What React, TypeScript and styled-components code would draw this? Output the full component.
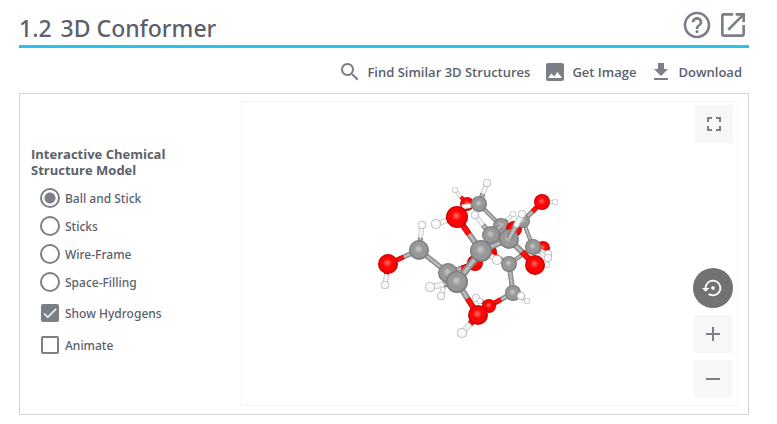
import React from "react";
import styled, { createGlobalStyle } from "styled-components";

const ink = "#5b616b";
const steel = "#7b7f88";

const GlobalStyle = createGlobalStyle`
  * { box-sizing: border-box; }
  body { margin: 0; background: #fff; color: ${ink}; font-family: "Noto Sans", "Open Sans", sans-serif; }
  button, input { font: inherit; color: inherit; }
`;

const Section = styled.section`
  padding: 10px 28px 9px 19px;
`;

const Header = styled.header`
  display: flex;
  align-items: center;
  justify-content: space-between;
  height: 38px;
  border-bottom: 3px solid #26c4ea;
`;

const Title = styled.h2`
  margin: 0;
  display: flex;
  gap: 9px;
  font-size: 23px;
  line-height: 32px;
  font-weight: 500;
`;

const HeaderIcons = styled.div`
  display: flex;
  gap: 4px;
  padding-bottom: 5px;
`;

const IconLink = styled.a`
  display: flex;
  color: ${steel};
`;

const Toolbar = styled.div`
  display: flex;
  justify-content: flex-end;
  align-items: center;
  gap: 13px;
  height: 45px;
  padding: 3px 7px 0 0;
`;

const ToolButton = styled.button`
  display: flex;
  align-items: center;
  gap: 5px;
  padding: 0;
  border: 0;
  background: none;
  font-family: "Open Sans", "Noto Sans", sans-serif;
  font-size: 13px;
  line-height: 20px;
  font-weight: 600;
  svg { color: ${steel}; }
`;

const Panel = styled.div`
  display: grid;
  grid-template-columns: 211px minmax(0, 1fr);
  padding: 7px 10px 8px;
  border: 1px solid #d3d3d4;
`;

const Controls = styled.form`
  padding: 45px 0 0 1px;
`;

const Group = styled.fieldset`
  margin: 0;
  padding: 0;
  border: 0;
`;

const Legend = styled.legend`
  width: 150px;
  padding: 0;
  margin-bottom: 6px;
  font-family: "Open Sans", "Noto Sans", sans-serif;
  font-size: 13px;
  line-height: 16px;
  font-weight: 700;
`;

const Option = styled.label<{ $tall?: boolean }>`
  display: flex;
  align-items: center;
  gap: 4px;
  height: ${(p) => (p.$tall ? 32 : 28)}px;
  padding-left: 9px;
  font-size: 12px;
  font-weight: 500;
`;

const Radio = styled.input`
  appearance: none;
  width: 20px;
  height: 20px;
  margin: 0 1px 0 0;
  border: 2px solid ${steel};
  border-radius: 50%;
  &:checked { background: radial-gradient(circle, ${steel} 0 5px, transparent 6px); }
`;

const Checks = styled.div`
  padding-top: 1px;
`;

const Tick = styled.input`
  appearance: none;
  width: 18px;
  height: 18px;
  margin: 0 2px 0 1px;
  border: 2px solid ${steel};
  border-radius: 2px;
  &:checked { background: ${steel}; }
  & + svg { visibility: hidden; }
  &:checked + svg { visibility: visible; }
`;

const TickBox = styled.span`
  display: grid;
  align-items: center;
  > * { grid-area: 1 / 1; }
  svg { margin-left: 1px; color: #fff; pointer-events: none; }
`;

const Viewer = styled.div`
  position: relative;
  display: flex;
  border: 1px dotted #e8e8e8;
`;

const Molecule = styled.svg`
  width: 100%;
  height: 303px;
`;

const Tools = styled.div`
  position: absolute;
  inset: 3px 4px 7px auto;
  display: flex;
  flex-direction: column;
  align-items: flex-end;
  gap: 7px;
`;

const Tool = styled.button<{ $round?: boolean }>`
  display: flex;
  align-items: center;
  justify-content: center;
  width: ${(p) => (p.$round ? 40 : 38)}px;
  height: ${(p) => (p.$round ? 40 : 38)}px;
  padding: 0;
  border: 0;
  border-radius: ${(p) => (p.$round ? "50%" : "2px")};
  background: ${(p) => (p.$round ? "#727272" : "#f7f7f7")};
  color: ${(p) => (p.$round ? "#fff" : steel)};
`;

const ZoomTools = styled.div`
  display: flex;
  flex-direction: column;
  align-items: center;
  gap: 7px;
  margin-top: auto;
`;

const Icon = ({ d, size }: { d: string; size: number }) => (
  <svg width={size} height={size} viewBox="0 0 24 24" fill="currentColor" aria-hidden="true">
    <path d={d} />
  </svg>
);

const icons = {
  help: "M11 18h2v-2h-2v2zm1-16C6.48 2 2 6.48 2 12s4.480 10 10 10 10-4.480 10-10S17.520 2 12 2zm0 18c-4.410 0-8-3.590-8-8s3.590-8 8-8 8 3.590 8 8-3.590 8-8 8zm0-14c-2.210 0-4 1.790-4 4h2c0-1.100.9-2 2-2s2 .9 2 2c0 2-3 1.750-3 5h2c0-2.250 3-2.500 3-5 0-2.210-1.790-4-4-4z",
  open: "M19 19H5V5h7V3H5c-1.110 0-2 .9-2 2v14c0 1.100.89 2 2 2h14c1.100 0 2-.9 2-2v-7h-2v7zM14 3v2h3.590l-9.830 9.830 1.410 1.410L19 6.410V10h2V3h-7z",
  search: "M15.500 14h-.79l-.28-.27C15.410 12.590 16 11.110 16 9.500 16 5.910 13.090 3 9.500 3S3 5.910 3 9.500 5.910 16 9.500 16c1.610 0 3.090-.59 4.230-1.570l.27.28v.79l5 4.990L20.490 19l-4.990-5zm-6 0C7.010 14 5 11.990 5 9.500S7.010 5 9.500 5 14 7.010 14 9.500 11.990 14 9.500 14z",
  image: "M21 19V5c0-1.100-.9-2-2-2H5c-1.100 0-2 .9-2 2v14c0 1.100.9 2 2 2h14c1.100 0 2-.9 2-2zM8.500 13.500l2.500 3.010L14.500 12l4.500 6H5l3.500-4.500z",
  download: "M19 9h-4V3H9v6H5l7 7 7-7zM5 18v2h14v-2H5z",
  full: "M7 14H5v5h5v-2H7v-3zm-2-4h2V7h3V5H5v5zm12 7h-3v2h5v-5h-2v3zM14 5v2h3v3h2V5h-5z",
  reset: "M14 12c0-1.100-.9-2-2-2s-2 .9-2 2 .9 2 2 2 2-.9 2-2zm-2-9c-4.970 0-9 4.030-9 9H0l4 4 4-4H5c0-3.870 3.130-7 7-7s7 3.130 7 7-3.130 7-7 7c-1.510 0-2.910-.49-4.060-1.300l-1.420 1.440C8.040 20.300 9.940 21 12 21c4.970 0 9-4.030 9-9s-4.030-9-9-9z",
  plus: "M19 13h-6v6h-2v-6H5v-2h6V5h2v6h6v2z",
  minus: "M19 13H5v-2h14v2z",
  check: "M9 16.170L4.830 12l-1.420 1.410L9 19 21 7l-1.410-1.410z",
};

type Element = "C" | "O" | "H";
type Atom = { el: Element; x: number; y: number; r: number };

const atoms: Record<string, Atom> = {
  o1: { el: "O", x: 467, y: 204, r: 7 },
  h1: { el: "H", x: 455, y: 190, r: 3 },
  c1: { el: "C", x: 479, y: 204, r: 8 },
  h2: { el: "H", x: 487, y: 183, r: 4 },
  h1b: { el: "H", x: 462, y: 207, r: 4 },
  c12: { el: "C", x: 501, y: 226, r: 8 },
  o10: { el: "O", x: 514, y: 229, r: 8 },
  h15: { el: "H", x: 513, y: 214, r: 3 },
  c9: { el: "C", x: 523, y: 221, r: 7 },
  o9: { el: "O", x: 542, y: 202, r: 8 },
  h17: { el: "H", x: 555, y: 202, r: 3 },
  o8: { el: "O", x: 543, y: 248, r: 7 },
  h18: { el: "H", x: 548, y: 254, r: 4 },
  h14: { el: "H", x: 548, y: 258, r: 4 },
  c8: { el: "C", x: 533, y: 247, r: 8 },
  h19: { el: "H", x: 547, y: 265, r: 3 },
  h3b: { el: "H", x: 475, y: 215, r: 4 },
  c11: { el: "C", x: 491, y: 235, r: 9 },
  o11: { el: "O", x: 490, y: 252, r: 7 },
  c7: { el: "C", x: 509, y: 264, r: 8 },
  c6: { el: "C", x: 513, y: 293, r: 8 },
  h10: { el: "H", x: 521, y: 296, r: 4 },
  h11: { el: "H", x: 527, y: 301, r: 3 },
  o6: { el: "O", x: 489, y: 306, r: 7 },
  h9: { el: "H", x: 476, y: 298, r: 4 },
  h9b: { el: "H", x: 480, y: 301, r: 3 },
  h16: { el: "H", x: 522, y: 214, r: 4 },
  c10: { el: "C", x: 509, y: 239, r: 10 },
  o7: { el: "O", x: 535, y: 265, r: 10 },
  o4: { el: "O", x: 475, y: 263, r: 8 },
  c4: { el: "C", x: 448, y: 273, r: 10 },
  h7: { el: "H", x: 441, y: 296, r: 4 },
  c3: { el: "C", x: 419, y: 250, r: 10 },
  h4: { el: "H", x: 422, y: 225, r: 4 },
  o3: { el: "O", x: 388, y: 264, r: 10 },
  h5: { el: "H", x: 385, y: 285, r: 4 },
  h6: { el: "H", x: 430, y: 287, r: 5 },
  c5: { el: "C", x: 457, y: 282, r: 11 },
  o5: { el: "O", x: 478, y: 315, r: 10 },
  h8: { el: "H", x: 462, y: 333, r: 5 },
  c2: { el: "C", x: 481, y: 251, r: 11 },
  h13: { el: "H", x: 497, y: 260, r: 5 },
  o2: { el: "O", x: 457, y: 217, r: 11 },
  h3: { el: "H", x: 436, y: 224, r: 5 },
};

type Step = { bond: [string, string]; w: number } | { atom: string };
const b = (from: string, to: string, w = 4): Step => ({ bond: [from, to], w });
const a = (atom: string): Step => ({ atom });

/* Painted from the farthest part of the molecule to the nearest. */
const scene: Step[] = [
  b("h1", "o1"), a("h1"), b("o1", "c1"), a("o1"), b("c1", "h2", 5), a("h2"), b("c1", "c12"), b("c1", "h1b", 5), a("c1"),
  b("h15", "c12"), a("h15"), b("c12", "o10"), a("c12"), b("o10", "c9"), a("o10"),
  b("c9", "o9", 5), b("o9", "h17"), a("h17"), a("o9"), b("c9", "c8"), a("c9"), a("o8"),
  b("c8", "h18"), a("h18"), b("c8", "h14"), a("h14"), b("c8", "c7"), a("c8"), a("h19"),
  b("h3b", "c11", 5), a("h3b"), b("c12", "c11", 5), b("c11", "c10", 6), a("c11"), a("o11"), b("c7", "c6", 5), b("c7", "o11"), a("c7"),
  b("h9", "o6"), a("h9"), a("h9b"), b("c6", "o6", 5), a("o6"), b("c6", "h11"), a("c6"), a("h11"), a("h10"),
  b("c10", "o7", 6), a("o7"), b("c2", "c10", 6), a("c10"), b("c10", "h16", 6), a("h16"),
  b("c4", "o4", 5), a("o4"), b("c3", "c4", 5), b("c3", "o3", 5), b("c3", "h4", 5), a("h4"), b("o3", "h5", 5), a("h5"), a("o3"), a("c3"),
  b("c4", "h7", 5), a("h7"), a("c4"), b("c5", "h6", 6), a("h6"), b("c5", "o5", 6), b("c5", "c2", 7), a("c5"),
  b("o5", "h8", 6), a("h8"), a("o5"), b("c2", "o2", 6), b("c2", "h13", 6), a("c2"), a("h13"), b("o2", "h3", 6), a("h3"), a("o2"),
];

const tones: Record<Element, { shine: string; base: string; edge: string }> = {
  C: { shine: "#cccccc", base: "#989898", edge: "#737373" },
  O: { shine: "#ff7070", base: "#fb0505", edge: "#c00000" },
  H: { shine: "#ffffff", base: "#f6f6f6", edge: "#a2a2a2" },
};

const Half = ({ from, to, w }: { from: Atom; to: Atom; w: number }) => {
  const line = { x1: from.x, y1: from.y, x2: (from.x + to.x) / 2, y2: (from.y + to.y) / 2 };
  const tone = tones[from.el];
  return (
    <>
      <line {...line} stroke={from.el === "H" ? "#bdbdbd" : tone.edge} strokeWidth={w} />
      <line {...line} stroke={from.el === "H" ? "#e8e8e8" : tone.base} strokeWidth={w - 1} />
      <line {...line} stroke={tone.shine} strokeWidth={w / 3} opacity={from.el === "O" ? 0.2 : 0.8} />
    </>
  );
};

const Conformer = () => (
  <Molecule viewBox="242 102 495 303" role="img" aria-label="Ball and stick model">
    <defs>
      {(Object.keys(tones) as Element[]).map((el) => (
        <radialGradient key={el} id={`ball-${el}`} cx="0.5" cy="0.5" r="0.5" fx="0.46" fy="0.42">
          <stop offset="0" stopColor={tones[el].shine} />
          <stop offset={el === "H" ? 0.6 : 0.45} stopColor={tones[el].base} />
          <stop offset="0.75" stopColor={tones[el].base} />
          <stop offset="1" stopColor={tones[el].edge} />
        </radialGradient>
      ))}
    </defs>
    {scene.map((step, i) => {
      if ("atom" in step) {
        const { el, x, y, r } = atoms[step.atom];
        return <circle key={i} cx={x} cy={y} r={r} fill={`url(#ball-${el})`} />;
      }
      const [p, q] = step.bond.map((id) => atoms[id]);
      return (
        <g key={i}>
          <Half from={p} to={q} w={step.w} />
          <Half from={q} to={p} w={step.w} />
        </g>
      );
    })}
  </Molecule>
);

const styles = ["Ball and Stick", "Sticks", "Wire-Frame", "Space-Filling"];

export default function App() {
  return (
    <>
      <GlobalStyle />
      <Section>
        <Header>
          <Title><span>1.2</span><span>3D Conformer</span></Title>
          <HeaderIcons>
            <IconLink href="#help" aria-label="Help"><Icon d={icons.help} size={32} /></IconLink>
            <IconLink href="#open" aria-label="Open in new window"><Icon d={icons.open} size={32} /></IconLink>
          </HeaderIcons>
        </Header>
        <Toolbar>
          <ToolButton type="button"><Icon d={icons.search} size={24} />Find Similar 3D Structures</ToolButton>
          <ToolButton type="button"><Icon d={icons.image} size={24} />Get Image</ToolButton>
          <ToolButton type="button"><Icon d={icons.download} size={24} />Download</ToolButton>
        </Toolbar>
        <Panel>
          <Controls>
            <Group>
              <Legend>Interactive Chemical Structure Model</Legend>
              {styles.map((name, i) => (
                <Option key={name}>
                  <Radio type="radio" name="model" defaultChecked={i === 0} />
                  {name}
                </Option>
              ))}
            </Group>
            <Checks>
              {["Show Hydrogens", "Animate"].map((name, i) => (
                <Option key={name} $tall>
                  <TickBox>
                    <Tick type="checkbox" defaultChecked={i === 0} />
                    <Icon d={icons.check} size={18} />
                  </TickBox>
                  {name}
                </Option>
              ))}
            </Checks>
          </Controls>
          <Viewer>
            <Conformer />
            <Tools>
              <Tool type="button" aria-label="Full screen"><Icon d={icons.full} size={24} /></Tool>
              <ZoomTools>
                <Tool type="button" $round aria-label="Reset view"><Icon d={icons.reset} size={22} /></Tool>
                <Tool type="button" aria-label="Zoom in"><Icon d={icons.plus} size={24} /></Tool>
                <Tool type="button" aria-label="Zoom out"><Icon d={icons.minus} size={24} /></Tool>
              </ZoomTools>
            </Tools>
          </Viewer>
        </Panel>
      </Section>
    </>
  );
}
